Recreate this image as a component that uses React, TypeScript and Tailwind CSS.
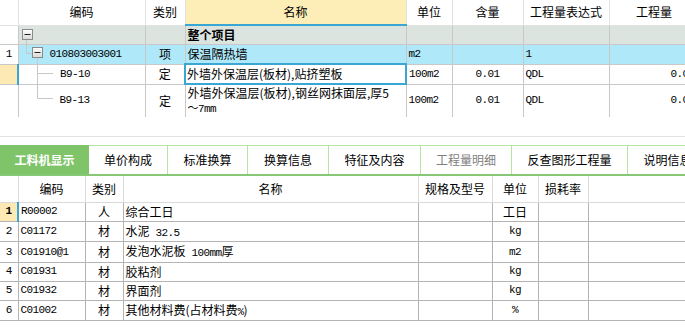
import React from "react"

const cjk = "font-['Noto_Sans_CJK_SC',sans-serif]"
const mono = "font-['Liberation_Mono','Noto_Sans_CJK_SC',monospace] text-[11px] tracking-[-0.6px]"

const topCols = [18, 127, 40, 221, 46, 71, 86, 90]
const bottomCols = [18, 67, 38, 295, 74, 46, 50, 97]

function MinusBox({ x, y }: { x: number; y: number }) {
  return (
    <g>
      <defs>
        <linearGradient id="mb" x1="0" y1="0" x2="0" y2="1">
          <stop offset="0" stopColor="#ffffff" />
          <stop offset="1" stopColor="#d8d8d8" />
        </linearGradient>
      </defs>
      <rect x={x + 0.5} y={y + 0.5} width={10} height={10} fill="url(#mb)" stroke="#8a8a8a" />
      <line x1={x + 2.5} y1={y + 5.5} x2={x + 8.5} y2={y + 5.5} stroke="#202020" strokeWidth={1} />
    </g>
  )
}

function TreeLines() {
  return (
    <svg className="absolute left-0 top-0 pointer-events-none" width={160} height={120}>
      <line x1={26.5} y1={40} x2={26.5} y2={53.5} stroke="#c8c8c8" />
      <line x1={26.5} y1={53.5} x2={32} y2={53.5} stroke="#c8c8c8" />
      <line x1={37.5} y1={58} x2={37.5} y2={98.5} stroke="#c8c8c8" />
      <line x1={37.5} y1={73.5} x2={53} y2={73.5} stroke="#c8c8c8" />
      <line x1={37.5} y1={98.5} x2={53} y2={98.5} stroke="#c8c8c8" />
      <MinusBox x={22} y={29} />
      <MinusBox x={32} y={47} />
    </svg>
  )
}

function TopTable() {
  const head = ["", "编码", "类别", "名称", "单位", "含量", "工程量表达式", "工程量"]
  return (
    <div className="relative h-[117px] overflow-hidden">
      <table className="table-fixed border-collapse text-[12px] text-black" style={{ width: 699 }}>
        <colgroup>
          {topCols.map((w, i) => (
            <col key={i} style={{ width: w }} />
          ))}
        </colgroup>
        <thead>
          <tr className="h-[25px]">
            {head.map((h, i) => (
              <th
                key={i}
                className={`border-r border-b border-[#e2e2e2] font-normal ${cjk} ${
                  i === 3 ? "bg-[#fdeeb8] font-bold border-b-2 border-b-[#3aa6d4]" : "bg-white"
                }`}
              >
                {h}
              </th>
            ))}
          </tr>
        </thead>
        <tbody>
          <tr className="h-[19px]">
            <td className="border-r border-b border-[#c8c8c8] bg-white"></td>
            <td className="border-r border-b border-[#c8c8c8] bg-[#dce4e0]"></td>
            <td className="border-r border-b border-[#c8c8c8] bg-[#dce4e0]"></td>
            <td className={`border-r border-b border-[#c8c8c8] bg-[#dce4e0] px-[2px] font-bold ${cjk}`}>整个项目</td>
            <td className="border-r border-b border-[#c8c8c8] bg-[#dce4e0]"></td>
            <td className="border-r border-b border-[#c8c8c8] bg-[#dce4e0]"></td>
            <td className="border-r border-b border-[#c8c8c8] bg-[#dce4e0]"></td>
            <td className="border-r border-b border-[#c8c8c8] bg-[#dce4e0]"></td>
          </tr>
          <tr className="h-[19px] bg-[#afe8f8]">
            <td className={`border-r border-b border-[#c8c8c8] bg-white text-center ${mono}`}>1</td>
            <td className={`border-r border-b border-[#c8c8c8] pl-[31px] ${mono}`}>010803003001</td>
            <td className={`border-r border-b border-[#c8c8c8] text-center ${cjk}`}>项</td>
            <td className={`border-r border-b border-[#c8c8c8] px-[2px] ${cjk}`}>保温隔热墙</td>
            <td className={`border-r border-b border-[#c8c8c8] px-[2px] ${mono}`}>m2</td>
            <td className="border-r border-b border-[#c8c8c8]"></td>
            <td className={`border-r border-b border-[#c8c8c8] px-[2px] ${mono}`}>1</td>
            <td className="border-r border-b border-[#c8c8c8]"></td>
          </tr>
          <tr className="h-[19px] bg-white">
            <td className="border-r-2 border-r-[#3aa6d4] border-b border-b-[#c8c8c8] bg-[#fde9b4]"></td>
            <td className={`border-r border-b border-[#c8c8c8] pl-[41px] ${mono}`}>B9-10</td>
            <td className={`border-r border-b border-[#c8c8c8] text-center ${cjk}`}>定</td>
            <td className={`border-2 border-[#3aa6d4] px-[1px] ${cjk} whitespace-nowrap`}>外墙外保温层(板材),贴挤塑板</td>
            <td className={`border-r border-b border-[#c8c8c8] px-[2px] ${mono}`}>100m2</td>
            <td className={`border-r border-b border-[#c8c8c8] text-center ${mono}`}>0.01</td>
            <td className={`border-r border-b border-[#c8c8c8] px-[2px] ${mono}`}>QDL</td>
            <td className={`border-r border-b border-[#c8c8c8] text-right pr-[4px] ${mono}`}>0.01</td>
          </tr>
          <tr className="h-[33px] bg-white">
            <td className="border-r border-b border-[#c8c8c8]"></td>
            <td className={`border-r border-b border-[#c8c8c8] pl-[41px] ${mono}`}>B9-13</td>
            <td className={`border-r border-b border-[#c8c8c8] text-center ${cjk}`}>定</td>
            <td className={`border-r border-b border-[#c8c8c8] px-[2px] leading-[14px] ${cjk}`}>
              外墙外保温层(板材),钢丝网抹面层,厚5
              <br />
              <span className={mono}>～7mm</span>
            </td>
            <td className={`border-r border-b border-[#c8c8c8] px-[2px] ${mono}`}>100m2</td>
            <td className={`border-r border-b border-[#c8c8c8] text-center ${mono}`}>0.01</td>
            <td className={`border-r border-b border-[#c8c8c8] px-[2px] ${mono}`}>QDL</td>
            <td className={`border-r border-b border-[#c8c8c8] text-right pr-[4px] ${mono}`}>0.01</td>
          </tr>
        </tbody>
      </table>
      <TreeLines />
    </div>
  )
}

const tabs = [
  { label: "工料机显示", w: 89 },
  { label: "单价构成", w: 79 },
  { label: "标准换算", w: 80 },
  { label: "换算信息", w: 81 },
  { label: "特征及内容", w: 92 },
  { label: "工程量明细", w: 91 },
  { label: "反查图形工程量", w: 116 },
  { label: "说明信息", w: 80 },
]

function Tabs() {
  return (
    <div className="flex h-[31px] w-[720px] border-b-2 border-[#86c874]">
      {tabs.map((t, i) => (
        <div
          key={t.label}
          style={{ width: t.w }}
          className={`flex shrink-0 items-center justify-center text-[12px] ${cjk} ${
            i === 0
              ? "bg-[#80c46a] font-bold text-white"
              : `border-t border-r border-[#b6e4a4] bg-white ${i === 5 ? "text-[#808080]" : "text-black"}`
          }`}
        >
          {t.label}
        </div>
      ))}
    </div>
  )
}

const rows = [
  { code: "R00002", type: "人", name: "综合工日", unit: "工日", cjkUnit: true },
  { code: "C01172", type: "材", name: "水泥 32.5", unit: "kg" },
  { code: "C01910@1", type: "材", name: "发泡水泥板 100mm厚", unit: "m2" },
  { code: "C01931", type: "材", name: "胶粘剂", unit: "kg" },
  { code: "C01932", type: "材", name: "界面剂", unit: "kg" },
  { code: "C01002", type: "材", name: "其他材料费(占材料费%)", unit: "%" },
]

function NameText({ s }: { s: string }) {
  const parts = s.split(/([A-Za-z0-9.%@ ]+)/).filter(Boolean)
  return (
    <>
      {parts.map((p, i) =>
        /^[A-Za-z0-9.%@ ]+$/.test(p) ? (
          <span key={i} className={`${mono} whitespace-pre`}>
            {p}
          </span>
        ) : (
          <span key={i}>{p}</span>
        )
      )}
    </>
  )
}

function BottomTable() {
  const head = ["", "编码", "类别", "名称", "规格及型号", "单位", "损耗率", ""]
  return (
    <table className="table-fixed border-collapse text-[12px] text-black" style={{ width: 685 }}>
      <colgroup>
        {bottomCols.map((w, i) => (
          <col key={i} style={{ width: w }} />
        ))}
      </colgroup>
      <thead>
        <tr className="h-[26px]">
          {head.map((h, i) => (
            <th
              key={i}
              className={`font-normal ${cjk} ${i < 7 ? "border-r border-b border-[#dadada]" : "border-b border-[#dadada]"}`}
            >
              {h}
            </th>
          ))}
        </tr>
      </thead>
      <tbody>
        {rows.map((r, i) => (
          <tr key={r.code} className="h-[19px]">
            <td
              className={`text-center ${mono} border-b border-[#b4b4b4] ${
                i === 0 ? "bg-[#fde9b4] font-bold border-r-2 border-r-[#3aa6d4]" : "border-r border-[#b4b4b4]"
              }`}
            >
              {i + 1}
            </td>
            <td className={`border-r border-b border-[#b4b4b4] px-[2px] ${mono} whitespace-nowrap`}>{r.code}</td>
            <td className={`border-r border-b border-[#b4b4b4] text-center ${cjk}`}>{r.type}</td>
            <td className={`border-r border-b border-[#b4b4b4] px-[2px] whitespace-nowrap ${cjk}`}>
              <NameText s={r.name} />
            </td>
            <td className="border-r border-b border-[#b4b4b4]"></td>
            <td className={`border-r border-b border-[#b4b4b4] text-center ${r.cjkUnit ? cjk : mono}`}>{r.unit}</td>
            <td className="border-r border-b border-[#b4b4b4]"></td>
            <td className="border-b border-[#b4b4b4]"></td>
          </tr>
        ))}
      </tbody>
    </table>
  )
}

export default function App() {
  return (
    <div className="h-[333px] w-[685px] overflow-hidden bg-white">
      <TopTable />
      <div className="h-[28px] flex flex-col">
        <div className="h-[19px]" />
        <div className="h-px bg-[#e2e2e2]" />
      </div>
      <div className="overflow-hidden">
        <Tabs />
      </div>
      <BottomTable />
    </div>
  )
}
